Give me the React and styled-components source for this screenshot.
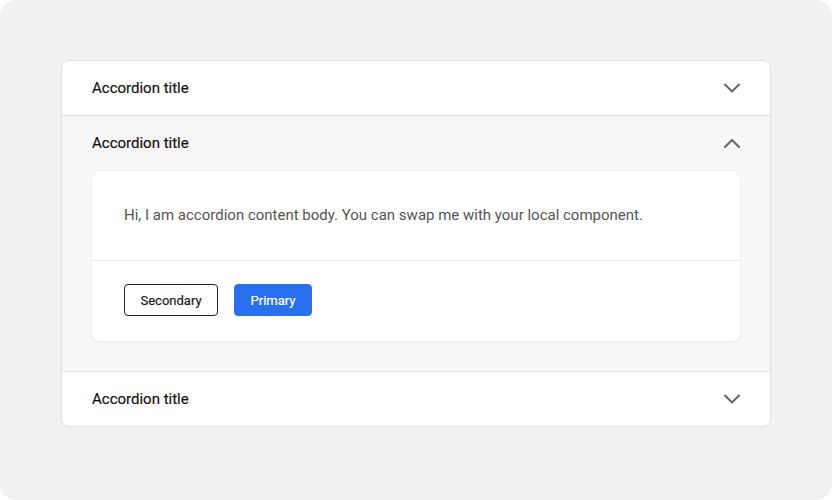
import React, { useState } from "react";
import styled, { createGlobalStyle } from "styled-components";

const GlobalStyle = createGlobalStyle`
  html, body {
    margin: 0;
    padding: 0;
    background: #ffffff;
  }
  body {
    font-family: Roboto, "Liberation Sans", sans-serif;
    -webkit-font-smoothing: antialiased;
  }
`;

const Chevron = ({ open }) => (
  <svg width="18" height="18" viewBox="0 0 18 18" fill="none">
    <path
      d={open ? "M2 13 L9 6 L16 13" : "M2 5.5 L9 12.5 L16 5.5"}
      stroke="#666666"
      strokeWidth="2"
      strokeLinecap="round"
      strokeLinejoin="round"
    />
  </svg>
);

const items = [
  { id: 1, title: "Accordion title" },
  { id: 2, title: "Accordion title" },
  { id: 3, title: "Accordion title" },
];

const App = () => {
  const [openId, setOpenId] = useState(2);
  return (
    <Frame>
      <GlobalStyle />
      <Accordion>
        {items.map((item) => {
          const open = item.id === openId;
          return (
            <Item key={item.id} $open={open}>
              <Header onClick={() => setOpenId(open ? null : item.id)}>
                <Title>{item.title}</Title>
                <Chevron open={open} />
              </Header>
              {open && (
                <Body>
                  <Panel>
                    <PanelText>
                      Hi, I am accordion content body. You can swap me with your local component.
                    </PanelText>
                    <PanelFooter>
                      <Button>Secondary</Button>
                      <Button $primary>Primary</Button>
                    </PanelFooter>
                  </Panel>
                </Body>
              )}
            </Item>
          );
        })}
      </Accordion>
    </Frame>
  );
};

const Frame = styled.div`
  width: 832px;
  height: 500px;
  box-sizing: border-box;
  background: #f1f1f1;
  border-radius: 16px;
  padding: 60px 61px;
`;

const Accordion = styled.div`
  background: #ffffff;
  border: 1px solid #e2e2e2;
  border-radius: 8px;
  overflow: hidden;
`;

const Item = styled.div`
  background: ${(p) => (p.$open ? "#f7f7f7" : "#ffffff")};
  & + & {
    border-top: 1px solid #e2e2e2;
  }
`;

const Header = styled.div`
  display: flex;
  align-items: center;
  justify-content: space-between;
  height: 54px;
  padding: 0 30px;
  cursor: pointer;
  svg {
    margin-right: -1px;
  }
`;

const Title = styled.span`
  font-size: 15px;
  font-weight: 400;
  color: #141414;
  -webkit-text-stroke: 0.2px #141414;
`;

const Body = styled.div`
  padding: 2px 30px 30px;
`;

const Panel = styled.div`
  background: #ffffff;
  border-radius: 8px;
  box-shadow: 0 1px 3px rgba(0, 0, 0, 0.06);
`;

const PanelText = styled.p`
  margin: 0;
  padding: 31px 32px 33px;
  font-size: 15px;
  line-height: 24px;
  color: #555555;
  border-bottom: 1px solid #e4e4e4;
`;

const PanelFooter = styled.div`
  display: flex;
  gap: 16px;
  padding: 23px 32px 25px;
`;

const Button = styled.button`
  height: 32px;
  box-sizing: border-box;
  padding: 0 15.5px;
  border-radius: 4px;
  font-family: Roboto, "Liberation Sans", sans-serif;
  font-size: 13px;
  font-weight: 400;
  -webkit-text-stroke: 0.2px currentColor;
  cursor: pointer;
  border: 1px solid ${(p) => (p.$primary ? "#2970f0" : "#222222")};
  background: ${(p) => (p.$primary ? "#2970f0" : "#ffffff")};
  color: ${(p) => (p.$primary ? "#ffffff" : "#1c1c1c")};
`;

export default App;
